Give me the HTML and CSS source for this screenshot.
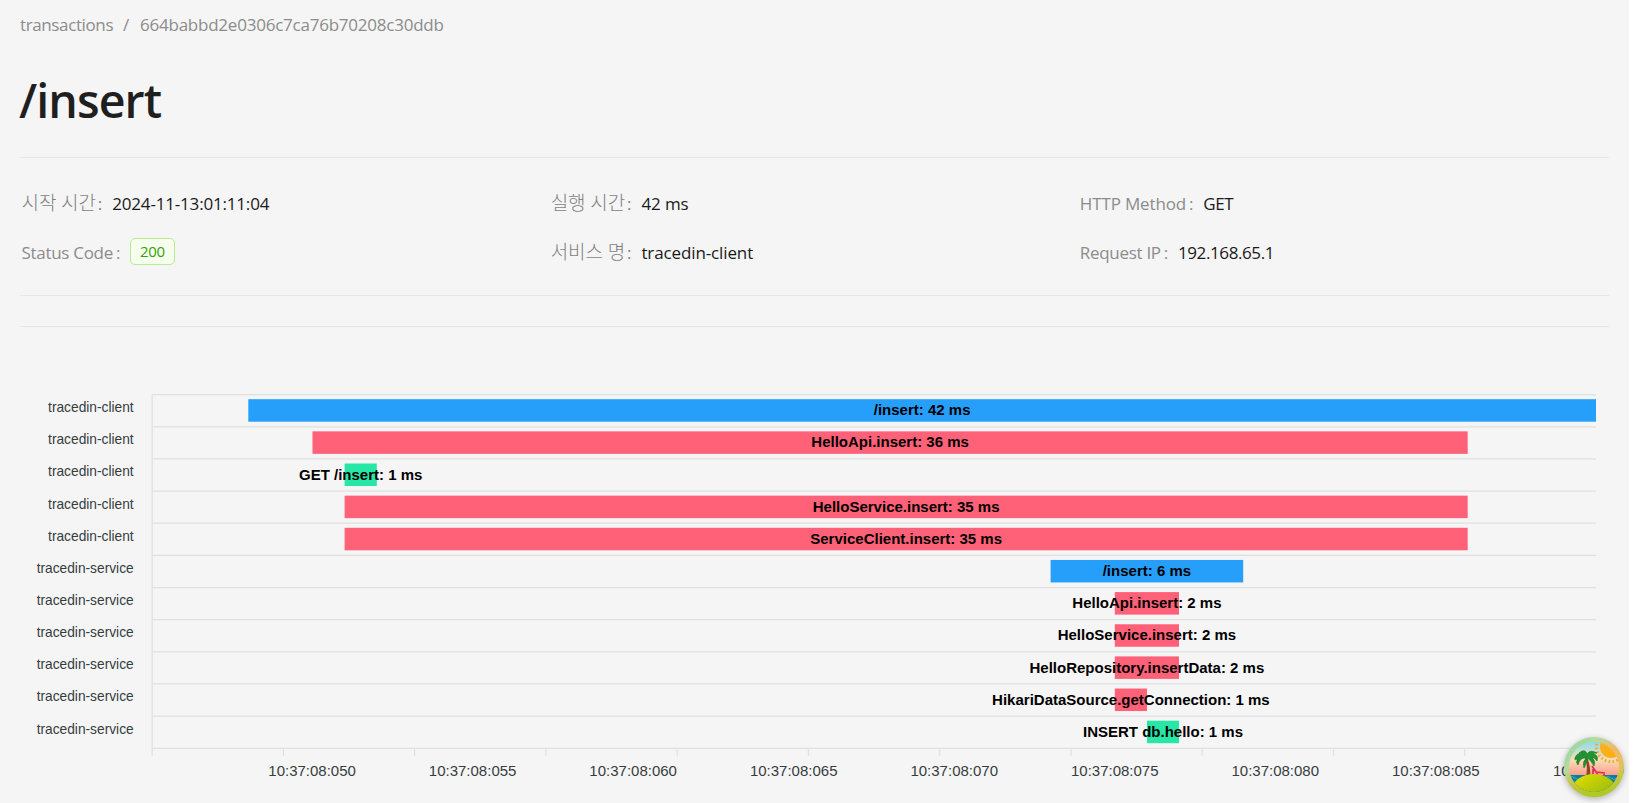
FILE: index.html
```html
<!DOCTYPE html>
<html lang="ko">
<head>
<meta charset="utf-8">
<title>/insert</title>
<link rel="stylesheet" href="styles.css">
</head>
<body>
<main class="page">
  <nav class="crumbs"><span class="crumb-root">transactions</span><span class="crumb-sep">/</span><span class="crumb-id">664babbd2e0306c7ca76b70208c30ddb</span></nav>
  <h1 class="title">/insert</h1>
  <dl class="details">
    <div class="item"><dt class="ko">시작 시간</dt><dd class="date">2024-11-13:01:11:04</dd></div>
    <div class="item"><dt class="ko">실행 시간</dt><dd class="dur">42 ms</dd></div>
    <div class="item"><dt class="method">HTTP Method</dt><dd class="get">GET</dd></div>
    <div class="item"><dt class="status">Status Code</dt><dd class="tag">200</dd></div>
    <div class="item"><dt class="ko">서비스 명</dt><dd class="svc">tracedin-client</dd></div>
    <div class="item"><dt class="reqip">Request IP</dt><dd class="ip">192.168.65.1</dd></div>
  </dl>
  <hr class="rule">
  <svg class="chart" id="chart" viewBox="0 374 1629 429" width="1629" height="429"></svg>
</main>
<svg class="fab" viewBox="-38 -36 76 76" width="76" height="76">
  <defs>
    <linearGradient id="ring" x1="0" y1="0" x2="1" y2="1"><stop offset="0" stop-color="#8fd0b0"/><stop offset=".3" stop-color="#b2dc9c"/><stop offset=".52" stop-color="#f4b569"/><stop offset=".7" stop-color="#e3c25a"/><stop offset="1" stop-color="#a8cc20"/></linearGradient>
    <linearGradient id="base" x1="0" y1="0" x2="0" y2="1"><stop offset=".55" stop-color="#a9cc1c" stop-opacity="0"/><stop offset="1" stop-color="#a9cc1c"/></linearGradient>
    <linearGradient id="sky" x1="0" y1="0" x2="0" y2="1"><stop offset="0" stop-color="#8fdcea"/><stop offset=".35" stop-color="#f6e0b8"/><stop offset=".68" stop-color="#ff9a8a"/></linearGradient>
    <linearGradient id="hill" x1="0" y1="0" x2="1" y2="1"><stop offset="0" stop-color="#e6e000"/><stop offset="1" stop-color="#7fae10"/></linearGradient>
    <clipPath id="disc"><circle r="25"/></clipPath>
  </defs>
  <circle class="fab-ring" r="30" fill="url(#ring)"/>
  <circle r="30" fill="url(#base)"/>
  <g clip-path="url(#disc)">
    <rect x="-25" y="-25" width="50" height="50" fill="url(#sky)"/>
    <circle cx="17" cy="-20" r="14.5" fill="none" stroke="#f8a62c" stroke-width="3" stroke-dasharray="1.7 2.2"/>
    <circle cx="17" cy="-20" r="11" fill="#ffae16"/>
    <rect x="-25" y="8" width="50" height="18" fill="#087f9c"/>
    <path d="M-25 11q3-3 6 0t6 0t6 0t6 0t6 0t6 0t6 0t6 0M-25 15q3-3 6 0t6 0t6 0t6 0t6 0t6 0t6 0t6 0" fill="none" stroke="#35b7c8" stroke-width="1"/>
    <path d="M-9-10Q-6-1-8 10L-4 9Q-3-1-7-10Z" fill="#8b4a20"/>
    <path d="M-8-9Q-14-10-16-2Q-19-5-16-8Q-20-6-19-9Q-17-15-11-13Q-14-15-15-14Q-9-19-7-13Q-4-18 3-14Q0-14-1-13Q5-12 3-6Q1-9-2-10Q2-6 0-1Q-4-8-7-9Q-7-4-10 1Q-12-5-8-9Z" fill="#239332" stroke="#15752b" stroke-width=".6"/>
    <path d="M-2-1L2 5L11 6M-1 2V8M3 6V9M10 7V9" fill="none" stroke="#e5265d" stroke-width="1.7"/>
    <ellipse cx="0" cy="23" rx="22" ry="16" fill="url(#hill)"/>
  </g>
</svg>
<script src="chart.js"></script>
</body>
</html>
```
FILE: styles.css
```css
* { box-sizing: border-box; }
body { margin: 0; height: 803px; overflow: hidden; background: #fff; font-family: "Open Sans", "Noto Sans CJK KR", sans-serif; }
.page { width: 1629px; height: 803px; background: #f5f5f5; }
.crumbs { display: flex; padding: 11px 0 0 20px; height: 50px; font-size: 17px; line-height: 28px; color: #8c8c8c; }
.crumb-root { width: 93px; letter-spacing: -.38px; }
.crumb-sep { width: 27px; padding-left: 10px; }
.crumb-id { letter-spacing: -.23px; }
.title { margin: 0 20px; height: 108px; padding-top: 19px; border-bottom: 1px solid #e6e6e6; font-size: 46.5px; line-height: 62px; font-weight: 600; letter-spacing: -.9px; text-indent: -1px; color: #1f1f1f; }
.details { display: grid; grid-template-columns: repeat(3, 1fr); grid-auto-rows: 49px; margin: 0 20px; padding: 21px 0 18px 1.5px; border-bottom: 1px solid #e6e6e6; font-size: 17px; }
.item { display: flex; align-items: center; line-height: 28px; }
.item dt { color: #8c8c8c; font-weight: 400; white-space: nowrap; }
.item dt::after { content: ":"; margin: 0 10px 0 3px; }
.item dd { margin: 0; color: #1a1a1a; white-space: nowrap; letter-spacing: -.4px; }
.item .ko { padding-bottom: 1px; color: #7f7f7f; font-size: 19px; font-weight: 300; letter-spacing: -.1px; }
.item .ko::after { margin: 0 10px 0 2px; font-size: 17px; font-weight: 400; }
.item .date { letter-spacing: -.18px; }
.item .svc, .item .dur { letter-spacing: -.12px; }
.item .method { letter-spacing: -.15px; }
.item .status, .item .reqip { letter-spacing: -.3px; }
.item .tag { height: 27px; margin-bottom: 2px; padding: 0 9px; border: 1px solid #b7eb8f; border-radius: 5px; background: #f6ffed; color: #389e0d; font-size: 15px; line-height: 24px; }
.rule { margin: 30px 20px 47px; border: 0; border-top: 1px solid #e6e6e6; }
.chart { display: block; font-family: "Liberation Sans", Arial, sans-serif; }
.grid { stroke: #e0e0e0; stroke-width: 1.25; }
.service { font-size: 13.75px; fill: #373d3f; text-anchor: end; }
.tick { font-size: 15px; fill: #373d3f; text-anchor: middle; }
.tick-last { font-size: 15px; fill: #373d3f; }
.span-label { font-size: 15px; font-weight: 700; fill: #000; text-anchor: middle; }
.blue { fill: #269ffb; }
.red { fill: #ff6178; }
.green { fill: #26e7a6; }
.fab { position: absolute; left: 1556px; top: 731px; }
.fab-ring { filter: drop-shadow(0 2px 3px rgba(0, 0, 0, .28)); }
```
FILE: chart.js
```js
const spans = [
  ["tracedin-client", "/insert: 42 ms", 248.3, 1596, "blue"],
  ["tracedin-client", "HelloApi.insert: 36 ms", 312.5, 1467.7, "red"],
  ["tracedin-client", "GET /insert: 1 ms", 344.6, 376.8, "green"],
  ["tracedin-client", "HelloService.insert: 35 ms", 344.6, 1467.7, "red"],
  ["tracedin-client", "ServiceClient.insert: 35 ms", 344.6, 1467.7, "red"],
  ["tracedin-service", "/insert: 6 ms", 1050.6, 1243.2, "blue"],
  ["tracedin-service", "HelloApi.insert: 2 ms", 1114.8, 1179, "red"],
  ["tracedin-service", "HelloService.insert: 2 ms", 1114.8, 1179, "red"],
  ["tracedin-service", "HelloRepository.insertData: 2 ms", 1114.8, 1179, "red"],
  ["tracedin-service", "HikariDataSource.getConnection: 1 ms", 1114.8, 1147, "red"],
  ["tracedin-service", "INSERT db.hello: 1 ms", 1147, 1179, "green"]
];
const left = 152.2, right = 1596, top0 = 394.6, pitch = 32.15;
const chart = document.getElementById("chart");
function add(tag, attrs, text) {
  const el = document.createElementNS("http://www.w3.org/2000/svg", tag);
  for (const key in attrs) el.setAttribute(key, attrs[key]);
  if (text) el.textContent = text;
  chart.appendChild(el);
}
const bottom = top0 + pitch * spans.length;
for (let i = 0; i <= spans.length; i++) {
  const y = top0 + pitch * i;
  add("line", { x1: left, x2: right, y1: y, y2: y, class: "grid" });
}
add("line", { x1: left, x2: left, y1: top0, y2: bottom + 7.5, class: "grid" });
for (let i = 1; i <= 10; i++) {
  const x = left + 131.25 * i;
  add("line", { x1: x, x2: x, y1: bottom, y2: bottom + 7.5, class: "grid" });
}
spans.forEach(([service, label, x1, x2, color], i) => {
  const y = top0 + pitch * i;
  add("text", { x: 133.7, y: Math.round(y + 17.52), class: "service" }, service);
  add("rect", { x: x1, y: y + 4.6, width: x2 - x1, height: 22.5, class: color });
  add("text", { x: (x1 + x2) / 2, y: Math.round(y + 20.7), class: "span-label" }, label);
});
for (let i = 0; i < 8; i++) {
  add("text", { x: 312.1 + 160.53 * i, y: 776, class: "tick" }, "10:37:08:0" + (50 + i * 5));
}
add("text", { x: 1553, y: 776, class: "tick-last" }, "10:37:08:0");
```
